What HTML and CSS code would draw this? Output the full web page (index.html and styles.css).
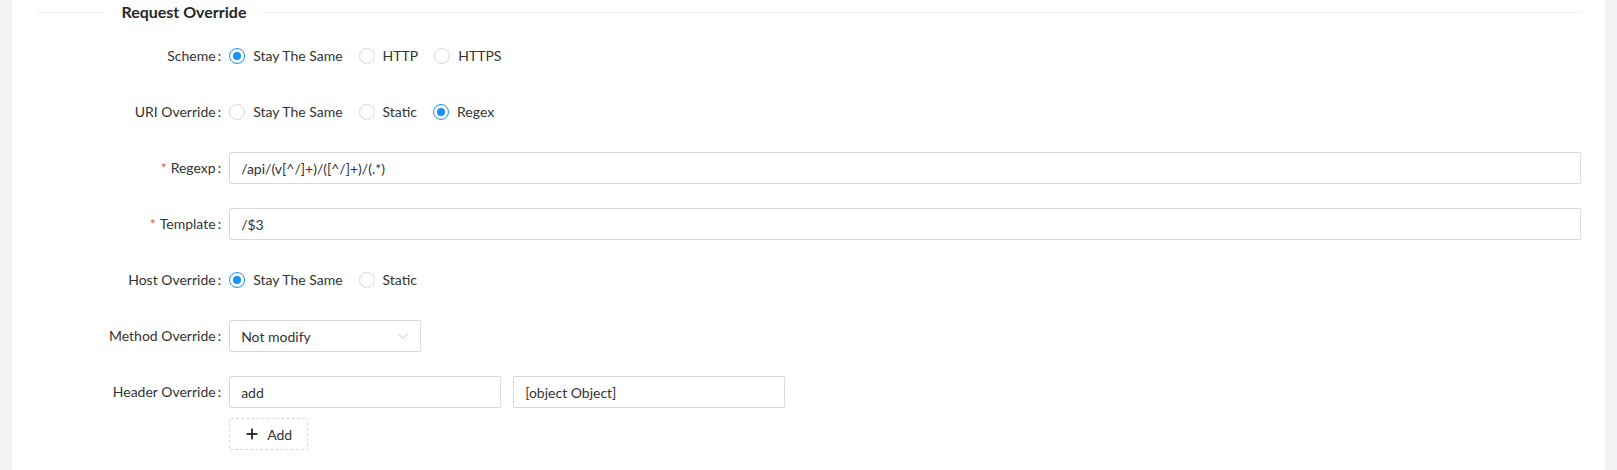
FILE: index.html
```html
<!DOCTYPE html>
<html lang="en">
<head>
<meta charset="utf-8">
<title>Request Override</title>
<link rel="stylesheet" href="styles.css">
</head>
<body>
<div class="page">
  <div class="panel">
    <div class="divider"><span class="divider-text">Request Override</span></div>
    <div class="form">
      <div class="form-item">
        <div class="label"><span class="label-text">Scheme</span></div>
        <div class="control">
          <label class="radio checked"><span class="dot"></span><span class="radio-text">Stay The Same</span></label>
          <label class="radio"><span class="dot"></span><span class="radio-text">HTTP</span></label>
          <label class="radio"><span class="dot"></span><span class="radio-text">HTTPS</span></label>
        </div>
      </div>
      <div class="form-item">
        <div class="label"><span class="label-text">URI Override</span></div>
        <div class="control">
          <label class="radio"><span class="dot"></span><span class="radio-text">Stay The Same</span></label>
          <label class="radio"><span class="dot"></span><span class="radio-text">Static</span></label>
          <label class="radio checked"><span class="dot"></span><span class="radio-text">Regex</span></label>
        </div>
      </div>
      <div class="form-item">
        <div class="label"><span class="label-text required">Regexp</span></div>
        <div class="control">
          <input class="input full" type="text" value="/api/(v[^/]+)/([^/]+)/(.*)">
        </div>
      </div>
      <div class="form-item">
        <div class="label"><span class="label-text required">Template</span></div>
        <div class="control">
          <input class="input full" type="text" value="/$3">
        </div>
      </div>
      <div class="form-item">
        <div class="label"><span class="label-text">Host Override</span></div>
        <div class="control">
          <label class="radio checked"><span class="dot"></span><span class="radio-text">Stay The Same</span></label>
          <label class="radio"><span class="dot"></span><span class="radio-text">Static</span></label>
        </div>
      </div>
      <div class="form-item">
        <div class="label"><span class="label-text">Method Override</span></div>
        <div class="control">
          <div class="select">
            <span class="select-value">Not modify</span>
            <svg class="select-arrow" width="12" height="12" viewBox="0 0 12 12"><polyline points="1.5,4 6,8.5 10.5,4" fill="none" stroke="#bfbfbf" stroke-width="1"/></svg>
          </div>
        </div>
      </div>
      <div class="form-item">
        <div class="label"><span class="label-text">Header Override</span></div>
        <div class="control column">
          <div class="pair">
            <input class="input half" type="text" value="add">
            <input class="input half" type="text" value="[object Object]">
          </div>
          <button class="add-btn" type="button">
            <svg class="plus" width="14" height="14" viewBox="0 0 14 14"><rect x="6.1" y="1.6" width="1.8" height="10.8" fill="#262626"/><rect x="1.6" y="6.1" width="10.8" height="1.8" fill="#262626"/></svg>
            <span>Add</span>
          </button>
        </div>
      </div>
    </div>
  </div>
</div>
</body>
</html>
```
FILE: styles.css
```css
* { box-sizing: border-box; }
html, body { margin: 0; padding: 0; }
body {
  background: #f0f2f5;
  font-family: "Lato", "Liberation Sans", sans-serif;
  font-size: 14px;
  color: rgba(0, 0, 0, 0.85);
}
.page {
  padding: 0 12px;
  height: 470px;
}
.panel {
  background: #fff;
  height: 100%;
  padding: 0 24px;
}
.divider {
  display: flex;
  align-items: center;
  height: 24px;
  margin-bottom: 16px;
  white-space: nowrap;
}
.divider::before,
.divider::after {
  content: "";
  border-top: 1px solid #f0f0f0;
}
.divider::before { width: 5%; }
.divider::after { width: 95%; }
.divider-text {
  padding: 0 16px;
  font-size: 16px;
  font-weight: 700;
  line-height: 24px;
  color: #262626;
}
.form-item {
  display: flex;
  align-items: flex-start;
  margin-bottom: 24px;
}
.label {
  flex: 0 0 12.5%;
  height: 32px;
  text-align: right;
  line-height: 32px;
  white-space: nowrap;
  color: #333;
}
.label-text::after {
  content: ":";
  margin: 0 8px 0 2px;
}
.label-text.required::before {
  content: "*";
  color: #ff4d4f;
  margin-right: 4px;
  font-size: 14px;
}
.control {
  flex: 0 0 87.5%;
  min-height: 32px;
  display: flex;
  align-items: center;
}
.control.column {
  flex-direction: column;
  align-items: flex-start;
}
.radio {
  display: inline-flex;
  align-items: center;
  margin-right: 8px;
  color: #333;
  line-height: 22px;
}
.dot {
  width: 16px;
  height: 16px;
  border: 1px solid #d9d9d9;
  border-radius: 50%;
  position: relative;
  background: #fff;
}
.radio.checked .dot { border-color: #1890ff; }
.radio.checked .dot::after {
  content: "";
  position: absolute;
  left: 3px;
  top: 3px;
  width: 8px;
  height: 8px;
  border-radius: 50%;
  background: #1890ff;
}
.radio-text { padding: 0 8px; }
.input {
  display: block;
  height: 32px;
  border: 1px solid #d9d9d9;
  border-radius: 2px;
  padding: 4px 11px;
  font-family: inherit;
  font-size: 14px;
  color: #333;
  background: #fff;
  outline: none;
}
.input.full { width: 100%; }
.input.half { width: 272px; }
.pair {
  display: flex;
  gap: 12px;
}
.select {
  width: 192px;
  height: 32px;
  border: 1px solid #d9d9d9;
  border-radius: 2px;
  padding: 0 11px;
  display: flex;
  align-items: center;
  justify-content: space-between;
  color: #333;
}
.add-btn {
  margin-top: 10px;
  height: 32px;
  padding: 0 15px;
  border: 1px dashed #d9d9d9;
  border-radius: 2px;
  background: #fff;
  display: inline-flex;
  align-items: center;
  gap: 8px;
  font-family: inherit;
  font-size: 14px;
  color: #333;
}
```
